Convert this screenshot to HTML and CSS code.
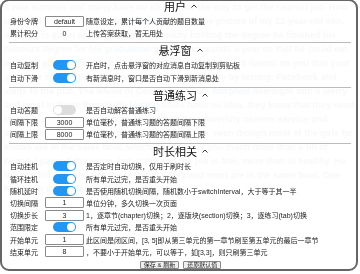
FILE: index.html
```html
<!DOCTYPE html>
<html lang="zh-CN">

<head>
    <meta charset="UTF-8">
    <meta name="viewport" content="width=device-width, initial-scale=1.0">
    <title>设置</title>
    <link rel="stylesheet" href="styles.css">
</head>

<body>
    <div class="article">
        <p>It was summer and many have no idea about the way to get the nearest job. How tough should a parent be to <a href="#">galvanize</a> them? The picture of my 22-year-old son, dressed in gown and mortarboard, proudly holding the degree he finished his honours degree for his <a href="#">graduation</a> photo. Thousands a year so that he could eat well and go to pubs, the bills began to taste. Until now. It dawns on you that your graduate son is still spending his days in the library by texting, Facebook and visits to the pub. The whole of Generation Y has <a href="#">morphed</a> overnight into a worry and most in these financially <a href="#">testing</a> times have no idea, they know that they need to get a job, but not sure how. He went to the university careers service and straight back home under pressure to find a job, even though most of the girls he knows are in the same boat, which doesn't buy you much more than a tin of beans. I passed the exam, but at the end the job is fine, more than is healthy. He talks to his parents. For the rest it is 9-to-5 and most are in the same boat. One has been supported by his parents.</p>
    </div>

    <div id="setting-panel">
        <div class="section">
            <div class="section-title">用户<svg class="caret" viewBox="0 0 6 4"><polyline points="0.5,3.5 3,1 5.5,3.5" /></svg></div>
            <div class="row">
                <span class="label">身份令牌</span>
                <input type="text" value="default">
                <span class="desc">随意设定，累计每个人贡献的题目数量</span>
            </div>
            <div class="row">
                <span class="label">累计积分</span>
                <span class="value">0</span>
                <span class="desc">上传答案获取，暂无用处</span>
            </div>
        </div>
        <hr>
        <div class="section">
            <div class="section-title">悬浮窗<svg class="caret" viewBox="0 0 6 4"><polyline points="0.5,3.5 3,1 5.5,3.5" /></svg></div>
            <div class="row">
                <span class="label">自动复制</span>
                <span class="switch on"></span>
                <span class="desc">开启时，点击悬浮窗的对应消息自动复制到剪贴板</span>
            </div>
            <div class="row">
                <span class="label">自动下滑</span>
                <span class="switch on"></span>
                <span class="desc">有新消息时，窗口是否自动下滑到新消息处</span>
            </div>
        </div>
        <hr>
        <div class="section">
            <div class="section-title">普通练习<svg class="caret" viewBox="0 0 6 4"><polyline points="0.5,3.5 3,1 5.5,3.5" /></svg></div>
            <div class="row">
                <span class="label">自动答题</span>
                <span class="switch"></span>
                <span class="desc">是否自动解答普通练习</span>
            </div>
            <div class="row">
                <span class="label">间隔下限</span>
                <input type="text" value="3000">
                <span class="desc">单位毫秒，普通练习题的答题间隔下限</span>
            </div>
            <div class="row">
                <span class="label">间隔上限</span>
                <input type="text" value="8000">
                <span class="desc">单位毫秒，普通练习题的答题间隔上限</span>
            </div>
        </div>
        <hr>
        <div class="section">
            <div class="section-title">时长相关<svg class="caret" viewBox="0 0 6 4"><polyline points="0.5,3.5 3,1 5.5,3.5" /></svg></div>
            <div class="row">
                <span class="label">自动挂机</span>
                <span class="switch on"></span>
                <span class="desc">是否定时自动切换，仅用于刷时长</span>
            </div>
            <div class="row">
                <span class="label">循环挂机</span>
                <span class="switch on"></span>
                <span class="desc">所有单元过完，是否重头开始</span>
            </div>
            <div class="row">
                <span class="label">随机延时</span>
                <span class="switch on"></span>
                <span class="desc">是否使用随机切换间隔，随机数小于switchInterval，大于等于其一半</span>
            </div>
            <div class="row">
                <span class="label">切换间隔</span>
                <input type="text" value="1">
                <span class="desc">单位分钟，多久切换一次页面</span>
            </div>
            <div class="row">
                <span class="label">切换步长</span>
                <input type="text" value="3">
                <span class="desc">1，逐章节(chapter)切换；2，逐版块(section)切换；3，逐练习(tab)切换</span>
            </div>
            <div class="row">
                <span class="label">范围限定</span>
                <span class="switch on"></span>
                <span class="desc">所有单元过完，是否重头开始</span>
            </div>
            <div class="row">
                <span class="label">开始单元</span>
                <input type="text" value="1">
                <span class="desc">此区间是闭区间，[3, 5]即从第三单元的第一章节刷至第五单元的最后一章节</span>
            </div>
            <div class="row">
                <span class="label">结束单元</span>
                <input type="text" value="8">
                <span class="desc">，不要小于开始单元，可以等于，如[3,3]，则只刷第三单元</span>
            </div>
        </div>
        <div class="buttons">
            <button>保存 &amp; 刷新</button>
            <button>还原默认值</button>
        </div>
    </div>
</body>

</html>
```

FILE: styles.css
```css
/* page behind the floating settings panel */
body {
    margin: 0;
    background: #fff;
    font-family: "Liberation Sans", "Noto Sans CJK SC", sans-serif;
}

.article {
    padding: 0 4px;
    font-size: 9px;
    font-weight: bold;
    line-height: 14px;
    color: #999;
}

.article p {
    margin: 0;
}

.article a {
    color: #5aa0f0;
    text-decoration: none;
}

/* settings panel */
#setting-panel {
    position: fixed;
    left: 0;
    top: -1px;
    width: 358px;
    height: 272px;
    box-sizing: border-box;
    border: 2px solid #666;
    border-radius: 9px;
    background: rgba(255, 255, 255, 0.93);
    padding: 0 5px 0 8px;
    font-size: 7px;
    color: #222;
    overflow: hidden;
}

.section-title {
    height: 14px;
    line-height: 12px;
    text-align: center;
    font-size: 11px;
    color: #111;
}

.caret {
    width: 6px;
    height: 4px;
    margin-left: 5px;
    vertical-align: 3px;
    fill: none;
    stroke: #333;
    stroke-width: 1;
}

.row {
    display: grid;
    grid-template-columns: 33px 39px 1fr;
    column-gap: 2px;
    align-items: center;
    height: 12.2px;
}

.label {
    white-space: nowrap;
}

.desc {
    white-space: nowrap;
}

.value {
    text-align: center;
}

.row input {
    width: 39px;
    height: 11px;
    box-sizing: border-box;
    padding: 0;
    margin: 0;
    border: 1px solid #8a8a8a;
    border-radius: 1px;
    font-family: inherit;
    font-size: 7px;
    color: #222;
    text-align: center;
}

.switch {
    position: relative;
    justify-self: center;
    width: 23px;
    height: 10px;
    border-radius: 5px;
    background: #ddd;
}

.switch::after {
    content: "";
    position: absolute;
    top: 1px;
    left: 1px;
    width: 8px;
    height: 8px;
    border-radius: 50%;
    background: #fff;
}

.switch.on {
    background: #2196f3;
}

.switch.on::after {
    left: 14px;
}

hr {
    margin: 3px 0 2px -1px;
    border: none;
    border-top: 1px solid #bbb;
}

.buttons {
    display: flex;
    justify-content: center;
    gap: 4px;
    margin-top: 3px;
}

.buttons button {
    height: 8px;
    padding: 0 3px;
    border: 1px solid #888;
    border-radius: 1px;
    background: #efefef;
    font-family: inherit;
    font-size: 6px;
    line-height: 6px;
    color: #222;
}
```
